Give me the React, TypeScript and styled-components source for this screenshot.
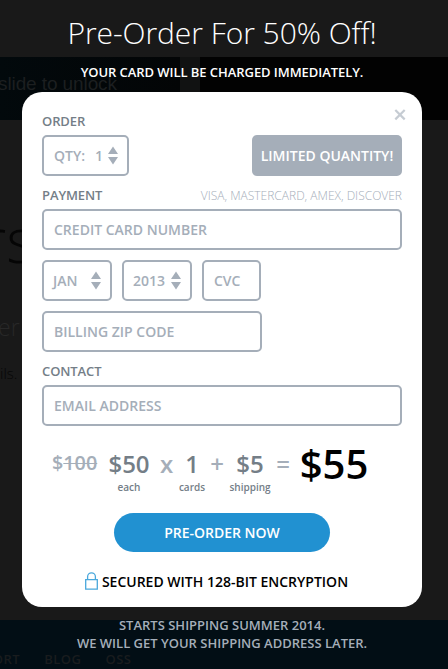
import React from "react";
import styled, { createGlobalStyle } from "styled-components";

const GlobalStyle = createGlobalStyle`
  * { box-sizing: border-box; }
  body { margin: 0; background: #191919; font-family: "Open Sans", sans-serif; }
  button, input { font-family: inherit; }
`;

const Screen = styled.div`
  display: grid;
  grid-template-columns: 448px;
  grid-template-rows: 669px;
  width: 448px;
  height: 669px;
  overflow: hidden;
  & > * { grid-area: 1 / 1; min-width: 0; }
`;

/* Dimmed site behind the dialog */
const Backdrop = styled.div`
  display: grid;
  grid-template-rows: 57px 63px 500px 49px;
  background: #191919;
  user-select: none;
`;

const PhoneStrip = styled.div`
  grid-row: 2;
  display: grid;
  grid-template-columns: 180px 20px 1fr;
  background: #111212;
`;

const SlideTrack = styled.div`
  background: linear-gradient(90deg, #02090c, #030506);
  color: #1c1f20;
  font: 19px/26px "Liberation Sans", sans-serif;
  letter-spacing: -0.1px;
  padding-top: 14px;
  text-indent: -2px;
  white-space: nowrap;
`;

const DarkPanel = styled.div`
  grid-column: 3;
  background: #020202;
`;

const SiteCopy = styled.div`
  grid-row: 3;
  font-weight: 300;
  white-space: nowrap;
  overflow: hidden;
`;

const GhostLine = styled.div<{ $size: number; $top: number; $left: number; $color: string }>`
  font-size: ${(p) => p.$size}px;
  line-height: ${(p) => p.$size}px;
  margin: ${(p) => p.$top}px 0 0 ${(p) => p.$left}px;
  color: ${(p) => p.$color};
`;

const SiteFooter = styled.div`
  grid-row: 4;
  display: flex;
  gap: 24px;
  padding-top: 29px;
  background: #020e15;
  color: #191c1e;
  font-size: 13px;
  line-height: 20px;
  font-weight: 600;
  letter-spacing: 0.5px;
`;

const FooterLink = styled.span<{ $shift?: number }>`
  margin-left: ${(p) => p.$shift ?? 0}px;
`;

const Overlay = styled.main`
  display: flex;
  flex-direction: column;
  align-items: center;
  width: 444px;
  z-index: 1;
`;

const Title = styled.h1`
  margin: 10px 0 0;
  height: 47px;
  color: #fff;
  font-size: 30px;
  line-height: 46px;
  font-weight: 300;
  letter-spacing: -0.05px;
  white-space: nowrap;
`;

const Notice = styled.p`
  margin: 5px 0 0;
  height: 30px;
  color: #fff;
  font-size: 13px;
  line-height: 20px;
  font-weight: 600;
  letter-spacing: -0.06px;
  white-space: nowrap;
`;

const Dialog = styled.form`
  display: flex;
  flex-direction: column;
  width: 400px;
  height: 515px;
  padding: 20px 20px 0;
  border-radius: 20px;
  background: #fff;
  position: relative;
`;

const CloseButton = styled.button`
  position: absolute;
  top: 17px;
  right: 16px;
  width: 12px;
  height: 12px;
  padding: 0;
  border: 0;
  background: none;
  svg { display: block; }
`;

const SectionHead = styled.div`
  display: flex;
  justify-content: space-between;
  height: 20px;
  margin-bottom: 3px;
  line-height: 19px;
`;

const SectionLabel = styled.span`
  color: #747e87;
  font-size: 13px;
  font-weight: 600;
  letter-spacing: -0.1px;
`;

const AcceptedCards = styled.span`
  color: #a5aeb9;
  font-size: 12px;
  font-weight: 300;
  white-space: nowrap;
`;

const Row = styled.div<{ $gap?: number; $after: number; $spread?: boolean }>`
  display: flex;
  gap: ${(p) => p.$gap ?? 0}px;
  justify-content: ${(p) => (p.$spread ? "space-between" : "flex-start")};
  margin-bottom: ${(p) => p.$after}px;
`;

const Field = styled.div<{ $width: number; $pad?: number }>`
  display: flex;
  align-items: center;
  width: ${(p) => p.$width}px;
  height: 41px;
  padding: 0 9px 0 ${(p) => p.$pad ?? 10}px;
  border: 2px solid #a5aeb9;
  border-radius: 5px;
  color: #a5aeb9;
  font-size: 14px;
  font-weight: 600;
  white-space: nowrap;
  svg { margin-left: auto; flex: none; }
`;

const TextInput = styled.input`
  width: 100%;
  padding: 0;
  border: 0;
  outline: 0;
  background: none;
  font-size: 14px;
  font-weight: 600;
  color: #747e87;
  &::placeholder { color: #a5aeb9; opacity: 1; }
`;

const Quantity = styled.span`
  margin-left: 10px;
`;

const LimitedTag = styled.div`
  width: 150px;
  height: 41px;
  border-radius: 5px;
  background: #a5aeb9;
  color: #fff;
  font-size: 14px;
  line-height: 41px;
  font-weight: 600;
  text-align: center;
  white-space: nowrap;
`;

const Sum = styled.div`
  display: grid;
  grid-template-columns: 47px 60px 15px 36px 14px 52px 14px 88px;
  justify-content: start;
  margin: 0 0 0 10px;
  height: 67px;
  text-align: center;
  white-space: nowrap;
`;

const Term = styled.div<{ $size?: number; $color?: string }>`
  color: ${(p) => p.$color ?? "#747e87"};
  font-size: ${(p) => p.$size ?? 24}px;
  line-height: 37px;
  font-weight: 600;
`;

const OldPrice = styled.span`
  color: #a5aeb9;
  font-size: 19.8px;
  line-height: 35px;
  font-weight: 600;
  text-align: left;
  s { text-decoration-thickness: 1px; }
`;

const Caption = styled.div`
  color: #747e87;
  font-size: 10px;
  line-height: 14px;
  font-weight: 600;
  margin-top: -2px;
`;

const SubmitButton = styled.button`
  align-self: center;
  width: 216px;
  height: 39px;
  margin-top: 1px;
  padding: 0;
  border: 0;
  border-radius: 20px;
  background: #2191d1;
  color: #fff;
  font-size: 14px;
  line-height: 39px;
  font-weight: 600;
`;

const Secured = styled.div`
  display: flex;
  align-items: center;
  justify-content: center;
  gap: 4px;
  margin-top: 19px;
  padding-right: 11px;
  height: 20px;
  color: #000;
  font-size: 14px;
  font-weight: 600;
  white-space: nowrap;
`;

const ShippingNote = styled.p`
  margin: 9px 0 0;
  color: #a5aeb9;
  font-size: 13px;
  line-height: 18px;
  font-weight: 600;
  text-align: center;
  white-space: nowrap;
`;

const Stepper = () => (
  <svg width="10" height="19" viewBox="0 0 10 19" fill="#a5aeb9">
    <path d="M5 0.5 10 8H0zM0 11h10L5 18.5z" />
  </svg>
);

export default function App() {
  return (
    <Screen>
      <GlobalStyle />
      <Backdrop aria-hidden>
        <PhoneStrip>
          <SlideTrack>slide to unlock</SlideTrack>
          <DarkPanel />
        </PhoneStrip>
        <SiteCopy>
          <GhostLine $size={62} $top={88} $left={-18} $color="#050505">rs</GhostLine>
          <GhostLine $size={23} $top={46} $left={-2} $color="#282828">er</GhostLine>
          <GhostLine $size={15} $top={27} $left={0} $color="#060606">ils.</GhostLine>
        </SiteCopy>
        <SiteFooter>
          <FooterLink $shift={-42}>SUPPORT</FooterLink>
          <FooterLink>BLOG</FooterLink>
          <FooterLink>OSS</FooterLink>
        </SiteFooter>
      </Backdrop>
      <Overlay>
        <Title>Pre-Order For 50% Off!</Title>
        <Notice>YOUR CARD WILL BE CHARGED IMMEDIATELY.</Notice>
        <Dialog onSubmit={(e) => e.preventDefault()}>
          <CloseButton type="button" aria-label="Close">
            <svg width="12" height="12" viewBox="0 0 12 12" stroke="#c6ccd3" strokeWidth="2.2">
              <path d="m1.3 1 9.4 9.4M10.7 1 1.3 10.4" />
            </svg>
          </CloseButton>
          <SectionHead>
            <SectionLabel>ORDER</SectionLabel>
          </SectionHead>
          <Row $after={10} $spread>
            <Field $width={87}>
              QTY:<Quantity>1</Quantity>
              <Stepper />
            </Field>
            <LimitedTag>LIMITED QUANTITY!</LimitedTag>
          </Row>
          <SectionHead>
            <SectionLabel>PAYMENT</SectionLabel>
            <AcceptedCards>VISA, MASTERCARD, AMEX, DISCOVER</AcceptedCards>
          </SectionHead>
          <Row $after={10}>
            <Field $width={360}><TextInput placeholder="CREDIT CARD NUMBER" /></Field>
          </Row>
          <Row $after={10} $gap={10}>
            <Field $width={70} $pad={9}>JAN<Stepper /></Field>
            <Field $width={70} $pad={9}>2013<Stepper /></Field>
            <Field $width={59}><TextInput placeholder="CVC" /></Field>
          </Row>
          <Row $after={10}>
            <Field $width={220}><TextInput placeholder="BILLING ZIP CODE" /></Field>
          </Row>
          <SectionHead>
            <SectionLabel>CONTACT</SectionLabel>
          </SectionHead>
          <Row $after={19}>
            <Field $width={360}><TextInput placeholder="EMAIL ADDRESS" /></Field>
          </Row>
          <Sum>
            <OldPrice>$<s>100</s></OldPrice>
            <div><Term>$50</Term><Caption>each</Caption></div>
            <Term $color="#a5aeb9">x</Term>
            <div><Term>1</Term><Caption>cards</Caption></div>
            <Term $color="#a5aeb9">+</Term>
            <div><Term>$5</Term><Caption>shipping</Caption></div>
            <Term $color="#a5aeb9">=</Term>
            <Term $color="#000" $size={40}>$55</Term>
          </Sum>
          <SubmitButton type="submit">PRE-ORDER NOW</SubmitButton>
          <Secured>
            <svg width="13" height="18" viewBox="0 0 13 18" fill="none" stroke="#4aa8dc" strokeWidth="1.3">
              <path d="M0.7 7.6h11.6v9.6H0.7zM2.6 7.5V4.7a3.9 3.9 0 0 1 7.8 0v2.8" />
            </svg>
            SECURED WITH 128-BIT ENCRYPTION
          </Secured>
        </Dialog>
        <ShippingNote>
          STARTS SHIPPING SUMMER 2014.
          <br />
          WE WILL GET YOUR SHIPPING ADDRESS LATER.
        </ShippingNote>
      </Overlay>
    </Screen>
  );
}
